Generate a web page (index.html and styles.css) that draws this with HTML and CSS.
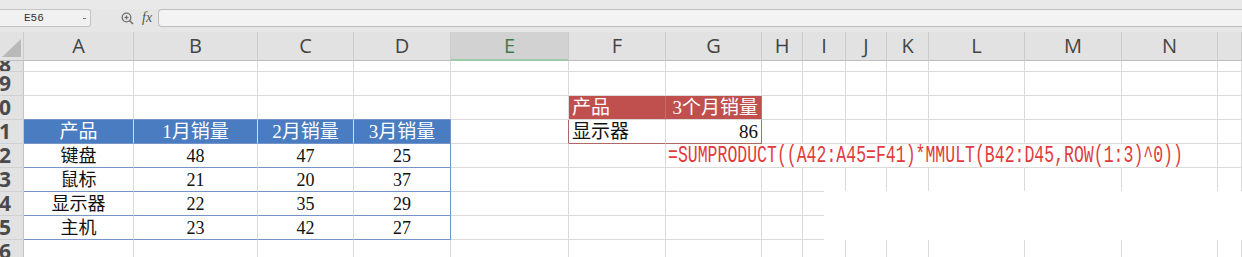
FILE: index.html
```html
<!DOCTYPE html>
<html lang="zh-CN">
<head>
    <meta charset="UTF-8">
    <meta name="viewport" content="width=device-width, initial-scale=1.0">
    <title>销量表</title>
    <link rel="stylesheet" href="styles.css">
</head>
<body>

<div class="toolbar"></div>

<!-- Barra de fórmula -->
<div class="formula-bar">
    <div class="name-box">
        <span class="cell-ref">E56</span>
        <span class="drop"></span>
    </div>
    <div class="fx-tools">
        <svg class="zoom-icon" width="13" height="13" viewBox="0 0 13 13">
            <circle cx="5.5" cy="5.5" r="4.3" fill="none" stroke="#6d6d6d" stroke-width="1.3"/>
            <line x1="3.5" y1="5.5" x2="7.5" y2="5.5" stroke="#6d6d6d" stroke-width="1.2"/>
            <line x1="5.5" y1="3.5" x2="5.5" y2="7.5" stroke="#6d6d6d" stroke-width="1.2"/>
            <line x1="8.7" y1="8.7" x2="12" y2="12" stroke="#6d6d6d" stroke-width="1.6"/>
        </svg>
        <span class="fx">fx</span>
    </div>
    <div class="formula-input"></div>
</div>

<table class="sheet">
    <colgroup>
        <col class="w-head">
        <col class="w-a">
        <col class="w-b">
        <col class="w-c">
        <col class="w-d">
        <col class="w-e">
        <col class="w-f">
        <col class="w-g">
        <col class="w-h">
        <col class="w-i">
        <col class="w-j">
        <col class="w-k">
        <col class="w-l">
        <col class="w-m">
        <col class="w-n">
        <col class="w-o">
    </colgroup>

    <tr class="col-heads">
        <th class="corner">
            <svg width="19" height="18" viewBox="0 0 19 18"><polygon points="19,0 19,18 0,18" fill="#b9b9b9"/></svg>
        </th>
        <th>A</th>
        <th>B</th>
        <th>C</th>
        <th>D</th>
        <th class="current">E</th>
        <th>F</th>
        <th>G</th>
        <th>H</th>
        <th>I</th>
        <th>J</th>
        <th>K</th>
        <th>L</th>
        <th>M</th>
        <th>N</th>
        <th></th>
    </tr>

    <tr class="row partial">
        <th class="row-num"><div class="num">38</div></th>
        <td></td><td></td><td></td><td></td><td></td><td></td><td></td><td></td>
        <td></td><td></td><td></td><td></td><td></td><td></td><td></td>
    </tr>

    <tr class="row">
        <th class="row-num"><div class="num">39</div></th>
        <td></td><td></td><td></td><td></td><td></td><td></td><td></td><td></td>
        <td></td><td></td><td></td><td></td><td></td><td></td><td></td>
    </tr>

    <tr class="row">
        <th class="row-num"><div class="num">40</div></th>
        <td class="t1"></td>
        <td class="t1"></td>
        <td class="t1"></td>
        <td class="t1"></td>
        <td></td>
        <td class="t2-head">产品</td>
        <td class="t2-head t2-num">3个月销量</td>
        <td></td><td></td><td></td><td></td><td></td><td></td><td></td><td></td>
    </tr>

    <tr class="row">
        <th class="row-num"><div class="num">41</div></th>
        <td class="t1 t1-head">产品</td>
        <td class="t1 t1-head">1月销量</td>
        <td class="t1 t1-head">2月销量</td>
        <td class="t1 t1-head t1-end">3月销量</td>
        <td class="t2-edge"></td>
        <td class="t2-cell">显示器</td>
        <td class="t2-cell t2-num t2-end">86</td>
        <td></td><td></td><td></td><td></td><td></td><td></td><td></td><td></td>
    </tr>

    <tr class="row">
        <th class="row-num"><div class="num">42</div></th>
        <td class="t1">键盘</td>
        <td class="t1">48</td>
        <td class="t1">47</td>
        <td class="t1 t1-end">25</td>
        <td></td>
        <td></td>
        <td class="formula" colspan="8"><span>=SUMPRODUCT((A42:A45=F41)*MMULT(B42:D45,ROW(1:3)^0))</span></td>
        <td></td>
    </tr>

    <tr class="row">
        <th class="row-num"><div class="num">43</div></th>
        <td class="t1">鼠标</td>
        <td class="t1">21</td>
        <td class="t1">20</td>
        <td class="t1 t1-end">37</td>
        <td></td><td></td><td></td><td></td><td></td><td></td><td></td><td></td><td></td><td></td><td></td>
    </tr>

    <tr class="row">
        <th class="row-num"><div class="num">44</div></th>
        <td class="t1">显示器</td>
        <td class="t1">22</td>
        <td class="t1">35</td>
        <td class="t1 t1-end">29</td>
        <td></td><td></td><td></td><td></td><td></td><td></td><td></td><td></td><td></td><td></td><td></td>
    </tr>

    <tr class="row">
        <th class="row-num"><div class="num">45</div></th>
        <td class="t1">主机</td>
        <td class="t1">23</td>
        <td class="t1">42</td>
        <td class="t1 t1-end">27</td>
        <td></td><td></td><td></td><td></td><td></td><td></td><td></td><td></td><td></td><td></td><td></td>
    </tr>

    <tr class="row">
        <th class="row-num"><div class="num">46</div></th>
        <td></td><td></td><td></td><td></td><td></td><td></td><td></td><td></td>
        <td></td><td></td><td></td><td></td><td></td><td></td><td></td>
    </tr>
</table>

<!-- área apagada da captura -->
<div class="blank-patch"></div>

</body>
</html>
```

FILE: styles.css
```css
* {
    box-sizing: border-box;
}

body {
    margin: 0;
    width: 1242px;
    height: 257px;
    overflow: hidden;
    position: relative;
    background-color: #fff;
    font-family: "Liberation Sans", "Noto Sans CJK SC", sans-serif;
}

/* Barra superior */
.toolbar {
    height: 9px;
    background-color: #e9e9e9;
}

.formula-bar {
    height: 23px;
    display: flex;
    align-items: flex-start;
    background-color: #e6e6e6;
}

.name-box {
    width: 91px;
    height: 18px;
    display: flex;
    align-items: center;
    background-color: #f1f1f1;
    border: 1px solid #c3c3c3;
    border-left: none;
    border-radius: 0 3px 3px 0;
}

.cell-ref {
    margin-left: 24px;
    font-family: "Liberation Mono", monospace;
    font-size: 11px;
    color: #333;
}

.drop {
    margin-left: auto;
    margin-right: 4px;
    width: 3px;
    height: 1px;
    background-color: #777;
}

.fx-tools {
    width: 67px;
    height: 18px;
    display: flex;
    align-items: center;
    padding-left: 30px;
    gap: 8px;
}

.zoom-icon {
    display: block;
}

.fx {
    font-family: "Liberation Serif", serif;
    font-style: italic;
    font-size: 14px;
    color: #555;
}

.formula-input {
    flex: 1;
    height: 18px;
    background-color: #f3f3f3;
    border: 1px solid #bdbdbd;
    border-right: none;
    border-radius: 4px 0 0 4px;
}

/* Planilha */
.sheet {
    width: 1242px;
    table-layout: fixed;
    border-collapse: separate;
    border-spacing: 0;
}

.w-head { width: 24px; }
.w-a { width: 110px; }
.w-b { width: 124px; }
.w-c { width: 96px; }
.w-d { width: 97px; }
.w-e { width: 118px; }
.w-f { width: 97px; }
.w-g { width: 96px; }
.w-h { width: 41px; }
.w-i { width: 43px; }
.w-j { width: 41px; }
.w-k { width: 42px; }
.w-l { width: 96px; }
.w-m { width: 97px; }
.w-n { width: 96px; }
.w-o { width: 24px; }

.sheet td,
.sheet th {
    padding: 0;
    border-right: 1px solid #dadada;
    border-bottom: 1px solid #dadada;
    overflow: hidden;
    white-space: nowrap;
}

.sheet td {
    font-family: "Liberation Serif", "Noto Sans CJK SC", serif;
    font-size: 18px;
    line-height: 20px;
    color: #111;
    vertical-align: middle;
}

.col-heads th {
    height: 29px;
    background-color: #e2e2e2;
    border-right-color: #cbcbcb;
    border-bottom-color: #bebebe;
    font-family: "Open Sans", sans-serif;
    font-size: 20px;
    line-height: 24px;
    font-weight: 400;
    color: #444;
    text-align: center;
    vertical-align: middle;
}

.col-heads th.current {
    background-color: #d2d2d2;
    color: #3d7a4c;
    border-bottom: 2px solid #9fcaa9;
}

.col-heads th.corner {
    vertical-align: bottom;
    padding: 0 2px 3px 0;
}

.corner svg {
    display: block;
    margin-left: auto;
}

.row td,
.row th {
    height: 24px;
}

.row.partial td,
.row.partial th {
    height: 11px;
}

.row-num {
    background-color: #e2e2e2;
    border-right-color: #c3c3c3 !important;
    border-bottom-color: #d0d0d0 !important;
    vertical-align: bottom;
}

.num {
    height: 23px;
    display: flex;
    justify-content: flex-end;
    align-items: center;
    overflow: hidden;
    padding-right: 12px;
    font-family: "Open Sans", sans-serif;
    font-size: 21px;
    line-height: 1;
    color: #4a4a4a;
}

.partial .num {
    height: 10px;
    align-items: flex-end;
    line-height: 14px;
}

/* Tabela azul */
.sheet td.t1 {
    text-align: center;
    border-bottom-color: #7694c8;
}

.sheet td.t1-end {
    border-right-color: #7694c8;
}

.sheet td.t1-head {
    background-color: #4a7cc1;
    color: #fff;
    font-size: 19px;
}

/* Tabela vermelha */
.sheet td.t2-head {
    background-color: #c0504d;
    color: #fff;
    font-size: 19px;
    padding: 0 3px;
    border-right-color: #c56b69;
}

.sheet td.t2-cell {
    padding: 0 3px;
    font-size: 19px;
    border-bottom-color: #b06866;
}

.sheet td.t2-num {
    text-align: right;
}

.sheet td.t2-end,
.sheet td.t2-edge {
    border-right-color: #b06866;
}

.sheet td.formula {
    padding-left: 2px;
    font-family: "Liberation Mono", monospace;
    font-size: 16.5px;
    color: #e23b3b;
}

.formula span {
    display: inline-block;
    transform: scaleY(1.4);
}

.blank-patch {
    position: absolute;
    left: 824px;
    top: 191px;
    width: 418px;
    height: 49px;
    background-color: #fff;
}
```
